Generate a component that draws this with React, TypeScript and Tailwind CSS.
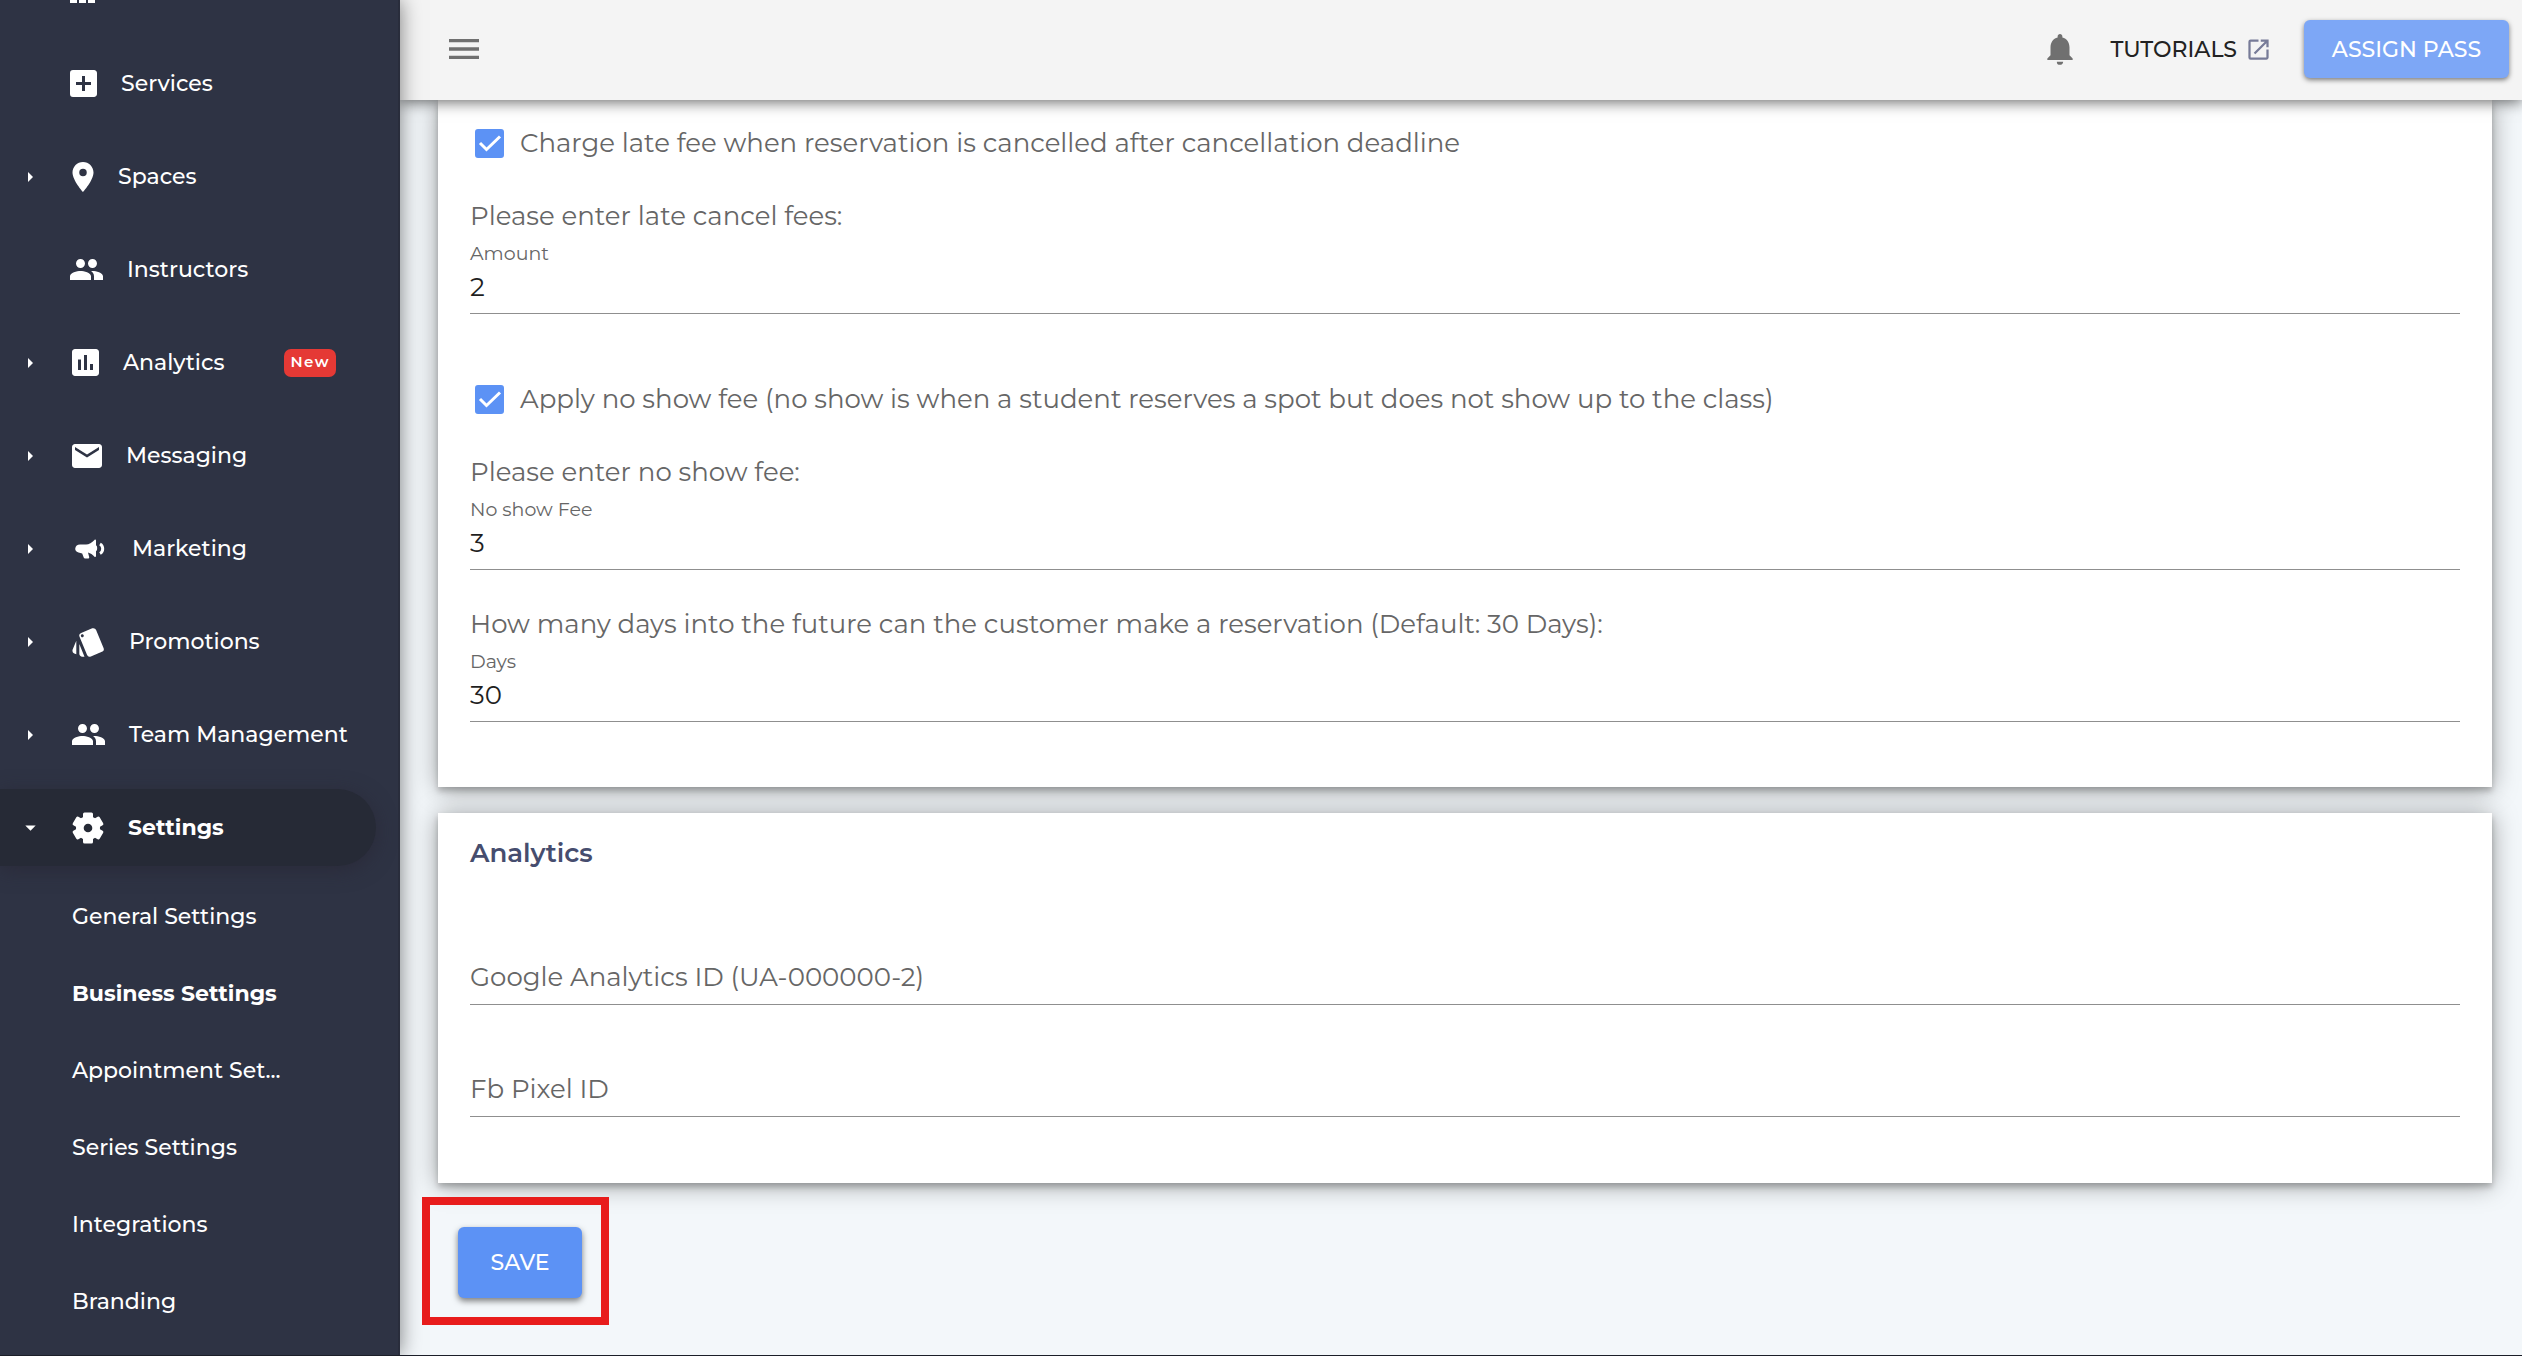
import type { ReactNode } from "react";
import type { IconType } from "react-icons";
import {
  MdAddBox,
  MdArrowDropDown,
  MdArrowRight,
  MdAssessment,
  MdEmail,
  MdMenu,
  MdNotifications,
  MdOpenInNew,
  MdPeople,
  MdPlace,
  MdStyle,
} from "react-icons/md";

type NavItem = {
  label: string;
  icon: ReactNode;
  expandable?: boolean;
  active?: boolean;
  badge?: string;
};

// The viewBox trims the empty margin of the icon so labels follow it closely
function NavIcon({ icon: Icon, box, className }: { icon: IconType; box: string; className: string }) {
  return <Icon viewBox={box} className={`shrink-0 ${className}`} aria-hidden />;
}

function GridIcon() {
  return (
    <svg viewBox="0 0 25 25" className="w-[25px] h-[25px] shrink-0" fill="currentColor" aria-hidden>
      {[0, 9, 18].map((y) =>
        [0, 9, 18].map((x) => <rect key={`${x}-${y}`} x={x} y={y} width="7" height="7" />)
      )}
    </svg>
  );
}

function MegaphoneIcon() {
  return (
    <svg viewBox="0 0 36 24" className="w-[36px] h-[24px] shrink-0" fill="currentColor" aria-hidden>
      <path d="M8 7.500h6c3 0 6-2 8.500-4.600.6-.6 1.500-.3 1.500.6v4.800c1.600.6 1.600 5.400 0 6v4.800c0 .9-.9 1.200-1.500.6-2-2-4-3.500-6.500-4.200l1.200 4.500c.2.800-.3 1.500-1.100 1.500h-3c-.7 0-1.200-.4-1.400-1.100L10.200 16.500 6.500 15.500C1.500 14.500 2.500 7.500 8 7.500z" />
      <path d="M28 7c3.600 2 3.600 7.500 0 9.500" fill="none" stroke="currentColor" strokeWidth="3" />
    </svg>
  );
}

function GearIcon() {
  return (
    <svg viewBox="0 0 32 32" className="w-[32px] h-[32px] shrink-0" fill="currentColor" aria-hidden>
      <circle cx="16" cy="16" r="12" />
      {[0, 60, 120].map((angle) => (
        <rect key={angle} x="11" y="0.5" width="10" height="31" rx="1.5" transform={`rotate(${angle} 16 16)`} />
      ))}
      <circle cx="16" cy="16" r="4.300" fill="#262a36" />
    </svg>
  );
}

const peopleIcon = <NavIcon icon={MdPeople} box="1 5 22 14" className="w-[33px] h-[21px]" />;

const navItems: NavItem[] = [
  { label: "Services", icon: <NavIcon icon={MdAddBox} box="3 3 18 18" className="w-[27px] h-[27px]" /> },
  { label: "Spaces", icon: <NavIcon icon={MdPlace} box="5 2 14 20" className="w-[22px] h-[30px]" />, expandable: true },
  { label: "Instructors", icon: peopleIcon },
  {
    label: "Analytics",
    icon: <NavIcon icon={MdAssessment} box="3 3 18 18" className="w-[27px] h-[27px]" />,
    expandable: true,
    badge: "New",
  },
  { label: "Messaging", icon: <NavIcon icon={MdEmail} box="2 4 20 16" className="w-[30px] h-[24px]" />, expandable: true },
  { label: "Marketing", icon: <MegaphoneIcon />, expandable: true },
  { label: "Promotions", icon: <NavIcon icon={MdStyle} box="1 2 22 20" className="w-[33px] h-[30px]" />, expandable: true },
  { label: "Team Management", icon: peopleIcon, expandable: true },
  { label: "Settings", icon: <GearIcon />, expandable: true, active: true },
];

const settingsLinks = [
  "General Settings",
  "Business Settings",
  "Appointment Set...",
  "Series Settings",
  "Integrations",
  "Branding",
];

function Sidebar() {
  return (
    <aside className="relative z-20 w-[400px] shrink-0 flex flex-col justify-end overflow-hidden border-r-2 border-[#292d3c] bg-[#2e3344] text-white shadow-[0_0_20px_rgba(0,0,0,0.5)]">
      <nav className="flex flex-col gap-4">
        <a href="#" aria-label="Dashboard" className="h-[77px] pl-[70px] flex items-center">
          <GridIcon />
        </a>
        {navItems.map((item) => (
          <a
            key={item.label}
            href="#"
            className={
              item.active
                ? "h-[77px] mr-[22px] pr-10 flex items-center rounded-r-full bg-[#262a36] shadow-[0_4px_20px_rgba(40,36,50,0.6)] font-bold"
                : "h-[77px] mr-[22px] pr-10 flex items-center font-medium"
            }
          >
            <span className={item.expandable ? "w-[72px] pl-[18px] shrink-0" : "w-[70px] shrink-0"}>
              {item.expandable && (item.active ? <MdArrowDropDown size={25} /> : <MdArrowRight size={24} />)}
            </span>
            {item.icon}
            <span className="ml-6 whitespace-nowrap">{item.label}</span>
            {item.badge && (
              <span className="ml-auto h-7 px-[6px] flex items-center rounded-[7px] bg-[#e53935] text-[15px] font-semibold tracking-widest">
                {item.badge}
              </span>
            )}
          </a>
        ))}
      </nav>
      <ul className="mt-3 mb-[15px]">
        {settingsLinks.map((link) => (
          <li key={link}>
            <a
              href="#"
              className={
                link === "Business Settings"
                  ? "h-[77px] pl-[72px] flex items-center font-bold"
                  : "h-[77px] pl-[72px] flex items-center font-medium"
              }
            >
              {link}
            </a>
          </li>
        ))}
      </ul>
    </aside>
  );
}

function Header() {
  return (
    <header className="relative z-10 h-[100px] shrink-0 pl-11 pr-[13px] pb-0.5 flex items-center bg-[#f4f4f4] shadow-[0_2px_14px_rgba(0,0,0,0.6)]">
      <button aria-label="Toggle menu" className="text-[#707070]">
        <MdMenu size={40} />
      </button>
      <button aria-label="Notifications" className="ml-auto text-[#707070]">
        <MdNotifications size={38} />
      </button>
      <a href="#" className="ml-8 flex items-center gap-2 font-medium text-[#222222]">
        TUTORIALS
        <MdOpenInNew size={27} className="text-[#777b98]" />
      </a>
      <button className="ml-8 h-[58px] w-[205px] rounded-md bg-[#7da7f6] font-medium text-white shadow-[0_2px_5px_rgba(0,0,0,0.5)]">
        ASSIGN PASS
      </button>
    </header>
  );
}

function CheckOption({ id, label }: { id: string; label: string }) {
  return (
    <div className="h-10 flex items-center gap-4 pl-[5px]">
      <span className="grid shrink-0">
        <input
          id={id}
          type="checkbox"
          defaultChecked
          className="peer col-start-1 row-start-1 size-[29px] appearance-none rounded-[3px] border-2 border-[#707070] checked:border-[#5c92f5] checked:bg-[#5c92f5]"
        />
        <svg
          viewBox="0 0 29 29"
          className="pointer-events-none invisible col-start-1 row-start-1 size-[29px] peer-checked:visible"
          fill="none"
          stroke="white"
          strokeWidth="3"
          aria-hidden
        >
          <path d="M5 14l6.500 6.500L25 7.500" />
        </svg>
      </span>
      <label htmlFor={id}>{label}</label>
    </div>
  );
}

function AmountField({ id, prompt, label, value }: { id: string; prompt: string; label: string; value: string }) {
  return (
    <div>
      <p className="h-10 leading-10">{prompt}</p>
      <label htmlFor={id} className="block mt-1 h-7 leading-7 text-[19px]">
        {label}
      </label>
      <input
        id={id}
        defaultValue={value}
        className="block h-[46px] w-full border-b border-[#8f8f8f] bg-transparent pb-2 text-[#1f1f1f] outline-none"
      />
    </div>
  );
}

function PlaceholderField({ label }: { label: string }) {
  return (
    <input
      aria-label={label}
      placeholder={label}
      className="block h-14 w-full border-b border-[#8f8f8f] bg-transparent outline-none placeholder:text-[#666666] placeholder:opacity-100"
    />
  );
}

const cardShadow = "shadow-[0_4px_6px_rgba(0,0,0,0.22),0_2px_24px_rgba(0,0,0,0.36)]";

export default function App() {
  return (
    <div className="h-screen flex overflow-hidden border-b border-[#1b1e28] bg-[#f3f7fa] font-['Montserrat','Inter',sans-serif] text-[22px]">
      <Sidebar />
      <div className="flex-1 min-w-0 flex flex-col">
        <Header />
        <main className="flex-1 pl-[38px] pr-[30px] text-[26px] text-[#666666]">
          <section className={`bg-white px-8 pt-[23px] pb-[65px] ${cardShadow}`}>
            <CheckOption id="late-fee" label="Charge late fee when reservation is cancelled after cancellation deadline" />
            <div className="mt-[33px]">
              <AmountField id="late-amount" prompt="Please enter late cancel fees:" label="Amount" value="2" />
            </div>
            <div className="mt-[65px]">
              <CheckOption
                id="no-show"
                label="Apply no show fee (no show is when a student reserves a spot but does not show up to the class)"
              />
            </div>
            <div className="mt-[33px]">
              <AmountField id="no-show-fee" prompt="Please enter no show fee:" label="No show Fee" value="3" />
            </div>
            <div className="mt-[34px]">
              <AmountField
                id="days"
                prompt="How many days into the future can the customer make a reservation (Default: 30 Days):"
                label="Days"
                value="30"
              />
            </div>
          </section>

          <section className={`mt-[26px] bg-white px-8 pt-5 pb-[66px] ${cardShadow}`}>
            <h2 className="h-10 leading-10 font-semibold text-[#464d6e]">Analytics</h2>
            <div className="mt-[76px] flex flex-col gap-14">
              <PlaceholderField label="Google Analytics ID (UA-000000-2)" />
              <PlaceholderField label="Fb Pixel ID" />
            </div>
          </section>

          <div className="relative mt-[14px] -ml-4 w-fit border-8 border-[#e81c1c] pt-[22px] pb-[19px] pl-7 pr-[19px]">
            <button className="block h-[71px] w-[124px] rounded-md bg-[#5c92f5] text-[22px] font-medium text-white shadow-[0_3px_6px_rgba(0,0,0,0.5)]">
              SAVE
            </button>
          </div>
        </main>
      </div>
    </div>
  );
}
